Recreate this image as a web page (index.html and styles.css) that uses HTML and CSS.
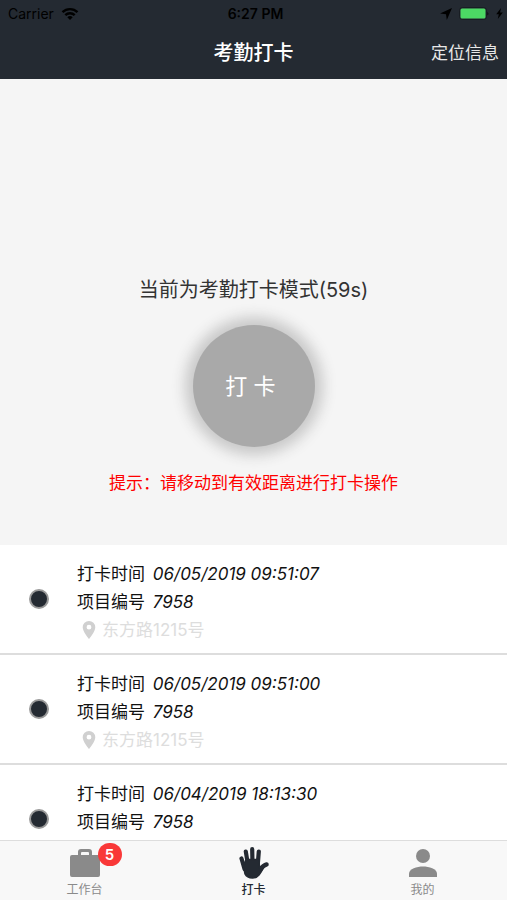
FILE: index.html
```html
<!DOCTYPE html>
<html lang="zh-CN">
<head>
    <meta charset="UTF-8">
    <meta name="viewport" content="width=device-width, initial-scale=1.0">
    <title>考勤打卡</title>
    <link rel="stylesheet" href="styles.css">
</head>
<body>
    <header class="header">
        <div class="status-bar">
            <div class="status-left">
                <span>Carrier</span>
                <svg width="18" height="14" viewBox="0 0 18 14" fill="none" stroke="#000" stroke-width="2.4">
                    <path d="M1.5 5.2a10.6 10.6 0 0 1 15 0M4.3 8.2a6.6 6.6 0 0 1 9.4 0"/>
                    <path d="M9 13L6.3 10.3a3.8 3.8 0 0 1 5.4 0z" fill="#000" stroke="none"/>
                </svg>
            </div>
            <span class="status-time">6:27 PM</span>
            <div class="status-right">
                <svg width="12" height="12" viewBox="0 0 12 12">
                    <path d="M12 0L6.8 12 6 6.200 0 5.500z"/>
                </svg>
                <svg width="30" height="13" viewBox="0 0 30 13">
                    <rect x=".5" y=".5" width="27" height="12" rx="3" fill="none" stroke="#181d23"/>
                    <rect x="1.5" y="1.5" width="25" height="10" rx="1.5" fill="#4cd964"/>
                    <path d="M28.5 4.5q1.5 2 0 4z"/>
                </svg>
                <svg width="7" height="11" viewBox="0 0 7 11">
                    <path d="M5 0L.2 6.2h2.6L1.8 11l5-6.4H4.1z"/>
                </svg>
            </div>
        </div>
        <div class="nav-bar">
            <h1 class="nav-title">考勤打卡</h1>
            <button type="button" class="nav-action">定位信息</button>
        </div>
    </header>

    <section class="punch">
        <p class="punch-mode">当前为考勤打卡模式(59s)</p>
        <button type="button" class="punch-button">打 卡 </button>
        <p class="punch-hint">提示：请移动到有效距离进行打卡操作</p>
    </section>

    <ul class="records">
        <li class="record">
            <span class="dot"></span>
            <div class="record-body">
                <p>打卡时间 <em>06/05/2019 09:51:07</em></p>
                <p>项目编号 <em>7958</em></p>
                <p class="address">
                    <svg width="14" height="20" viewBox="0 0 14 20"><path fill-rule="evenodd" d="M7 1a6.3 6.3 0 0 0-6.3 6.3C.7 11.8 7 19 7 19s6.3-7.2 6.3-11.7A6.3 6.3 0 0 0 7 1zm0 3.8a2.4 2.4 0 1 1 0 4.8 2.4 2.4 0 0 1 0-4.8z"/></svg>
                    <span>东方路1215号</span>
                </p>
            </div>
        </li>
        <li class="record">
            <span class="dot"></span>
            <div class="record-body">
                <p>打卡时间 <em>06/05/2019 09:51:00</em></p>
                <p>项目编号 <em>7958</em></p>
                <p class="address">
                    <svg width="14" height="20" viewBox="0 0 14 20"><path fill-rule="evenodd" d="M7 1a6.3 6.3 0 0 0-6.3 6.3C.7 11.8 7 19 7 19s6.3-7.2 6.3-11.7A6.3 6.3 0 0 0 7 1zm0 3.8a2.4 2.4 0 1 1 0 4.8 2.4 2.4 0 0 1 0-4.8z"/></svg>
                    <span>东方路1215号</span>
                </p>
            </div>
        </li>
        <li class="record">
            <span class="dot"></span>
            <div class="record-body">
                <p>打卡时间 <em>06/04/2019 18:13:30</em></p>
                <p>项目编号 <em>7958</em></p>
            </div>
        </li>
    </ul>

    <nav class="tab-bar">
        <a href="#work" class="tab">
            <span class="tab-icon">
                <svg width="30" height="28" viewBox="0 0 30 28">
                    <path fill-rule="evenodd" d="M8 6V3Q8 0 11 0h8q3 0 3 3v3h6q2 0 2 2v18q0 2-2 2H2q-2 0-2-2V8q0-2 2-2zm3 0h8V4q0-1-1-1h-6q-1 0-1 1z"/>
                </svg>
                <span class="badge">5</span>
            </span>
            <span>工作台</span>
        </a>
        <a href="#punch" class="tab active">
            <span class="tab-icon">
                <svg width="32" height="32" viewBox="0 0 32 32" fill="none" stroke="currentColor" stroke-linecap="round" stroke-linejoin="round">
                    <path d="M3.5 11.5L6.5 22M7.8 4.5L10 18M14.2 2.2L14.5 17M20.8 4.5L19.8 17" stroke-width="4.2"/>
                    <path d="M28.5 17.5Q25.500 18 22 23" stroke-width="4.600"/>
                    <path d="M5.500 19L8 12.500H21L21.500 21 26 19.500Q23.500 25 21 28 18.500 31 14.500 31 9 31 7 27z" fill="currentColor" stroke-width="1.500"/>
                </svg>
            </span>
            <span>打卡</span>
        </a>
        <a href="#mine" class="tab">
            <span class="tab-icon">
                <svg width="28" height="28" viewBox="0 0 28 28">
                    <circle cx="14" cy="7" r="7"/>
                    <path d="M0 28v-3.5C0 20 8 17.5 14 17.5S28 20 28 24.5V28z"/>
                </svg>
            </span>
            <span>我的</span>
        </a>
    </nav>
</body>
</html>
```
FILE: styles.css
```css
* {
    box-sizing: border-box;
}
body {
    display: flex;
    flex-direction: column;
    height: 100vh;
    margin: 0;
    font-family: Inter, "Noto Sans CJK SC", sans-serif;
    font-size: 17px;
    color: #111;
    background-color: #fff;
}
h1, p, ul {
    margin: 0;
    padding: 0;
    font-weight: normal;
}
button {
    padding: 0;
    border: none;
    font-family: inherit;
}

.header {
    flex: none;
    background-color: #242a32;
}
.status-bar {
    display: grid;
    grid-template-columns: 1fr auto 1fr;
    align-items: center;
    height: 27px;
    padding: 0 4px 0 8px;
    font-size: 14px;
    color: #000;
}
.status-left, .status-right {
    display: flex;
    align-items: center;
    gap: 7px;
}
.status-right {
    justify-content: flex-end;
}
.status-time {
    font-weight: 600;
}
.nav-bar {
    display: grid;
    grid-template-columns: 1fr auto 1fr;
    align-items: center;
    height: 52px;
    padding: 0 8px 4px;
}
.nav-title {
    grid-column: 2;
    font-size: 20px;
    font-weight: 500;
    color: #fff;
}
.nav-action {
    justify-self: end;
    font-size: 17px;
    color: #e8e8e8;
    background: none;
}

.punch {
    flex: none;
    display: flex;
    flex-direction: column;
    align-items: center;
    padding: 196px 0 47px;
    background-color: #f5f5f5;
}
.punch-mode {
    font-size: 20px;
    line-height: 30px;
    color: #333;
}
.punch-button {
    width: 122px;
    height: 122px;
    margin: 20px 0 21px;
    padding-bottom: 4px;
    border-radius: 50%;
    font-size: 22px;
    white-space: pre;
    color: #fff;
    background-color: #a9a9a9;
    box-shadow: 0 0 14px 8px #c8c8c8;
}
.punch-hint {
    line-height: 30px;
    color: #f00;
}

.records {
    flex: 1;
    min-height: 0;
    overflow: hidden;
    list-style: none;
}
.record {
    display: flex;
    align-items: center;
    height: 110px;
    padding: 0 29px;
    border-bottom: 2px solid #ddd;
}
.dot {
    width: 20px;
    height: 20px;
    border: 2px solid #999;
    border-radius: 50%;
    background-color: #242a32;
}
.record-body {
    align-self: flex-start;
    padding: 15px 0 0 28px;
    line-height: 28px;
}
.record-body em {
    margin-left: 3px;
}
.address {
    display: flex;
    align-items: center;
    gap: 6px;
    padding-left: 5px;
    color: #ddd;
}
.address svg {
    fill: #d0d0d0;
}

.tab-bar {
    flex: none;
    display: flex;
    height: 60px;
    border-top: 1px solid #ddd;
    background-color: #f8f8f8;
}
.tab {
    flex: 1;
    display: flex;
    flex-direction: column;
    align-items: center;
    padding-top: 4px;
    font-size: 12px;
    line-height: 20px;
    text-decoration: none;
    color: #8a8a8a;
}
.tab-icon {
    position: relative;
    display: flex;
    align-items: center;
    height: 37px;
}
.tab-icon svg {
    fill: currentColor;
}
.tab.active {
    font-weight: 500;
    color: #242a32;
}
.badge {
    position: absolute;
    top: -2px;
    left: 28px;
    width: 24px;
    height: 23px;
    border-radius: 12px;
    font-size: 15px;
    font-weight: 600;
    line-height: 23px;
    text-align: center;
    color: #fff;
    background-color: #f93838;
}
```
